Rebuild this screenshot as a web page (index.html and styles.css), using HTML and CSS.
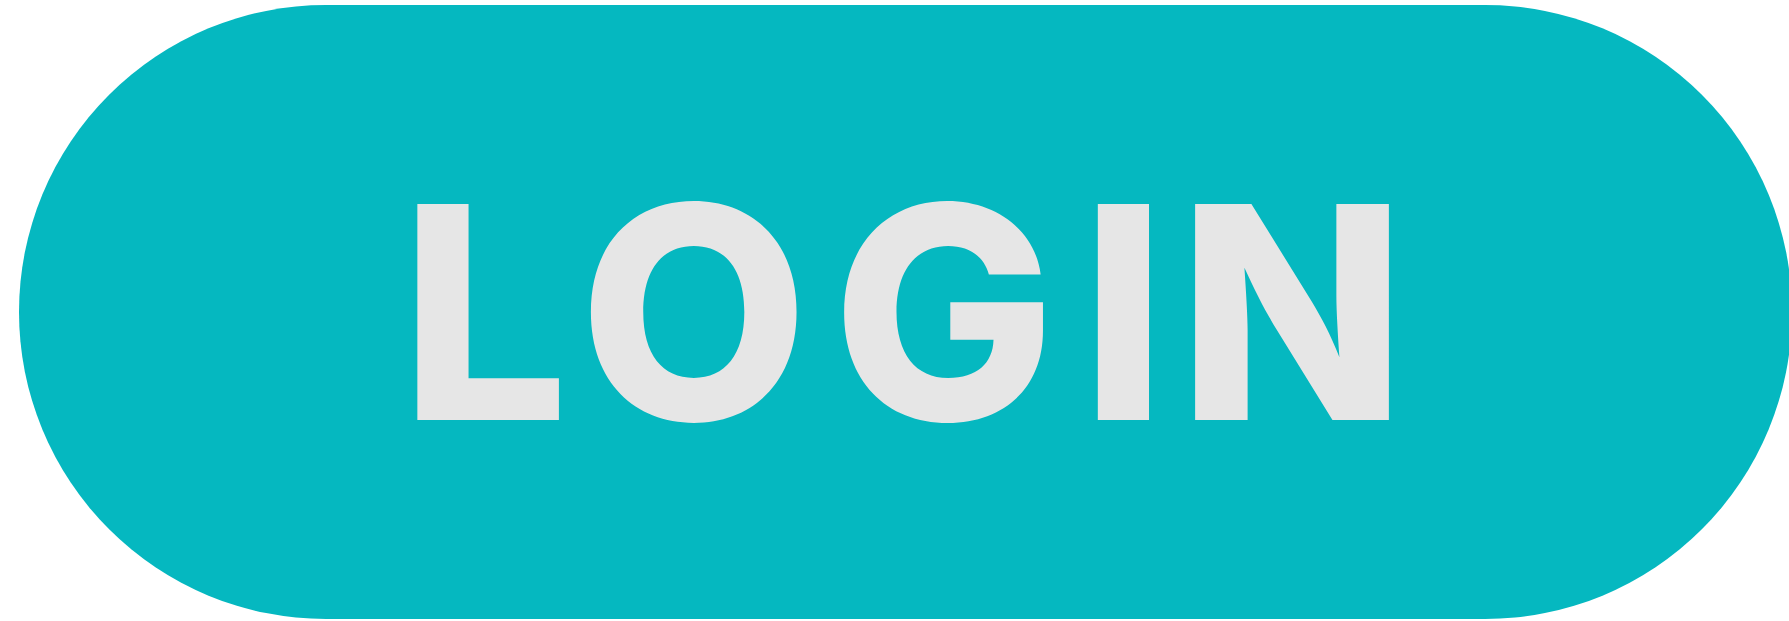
FILE: index.html
```html
<!DOCTYPE html>
<html lang="en">
<head>
<meta charset="utf-8">
<title>Login</title>
<link rel="stylesheet" href="styles.css">
</head>
<body>
<div class="stage">
  <button class="login-btn" type="button" aria-label="LOGIN">
    <span class="label"><span class="ch">L</span><span class="ch">O</span><span class="ch">G</span><span class="ch">I</span><span class="ch">N</span></span>
  </button>
</div>
</body>
</html>
```

FILE: styles.css
```css
html, body {
  margin: 0;
  padding: 0;
  background: #ffffff;
  overflow: hidden;
}
.stage {
  width: 1789px;
  height: 621px;
  padding: 5px 0 0 19px;
  box-sizing: border-box;
}
.login-btn {
  display: flex;
  align-items: center;
  justify-content: center;
  width: 1773px;
  height: 614px;
  border: 0;
  padding: 0;
  margin: 0;
  border-radius: 307px;
  background: #05b8c0;
  color: #e6e6e6;
  font-family: "Inter", "Liberation Sans", sans-serif;
  font-weight: 800;
  font-size: 297px;
  line-height: 1;
  cursor: pointer;
}
.label {
  display: grid;
  grid-template-columns: 189px 228px 274px 75px 272px;
  margin-left: 7px;
}
.ch {
  text-align: center;
}
```
